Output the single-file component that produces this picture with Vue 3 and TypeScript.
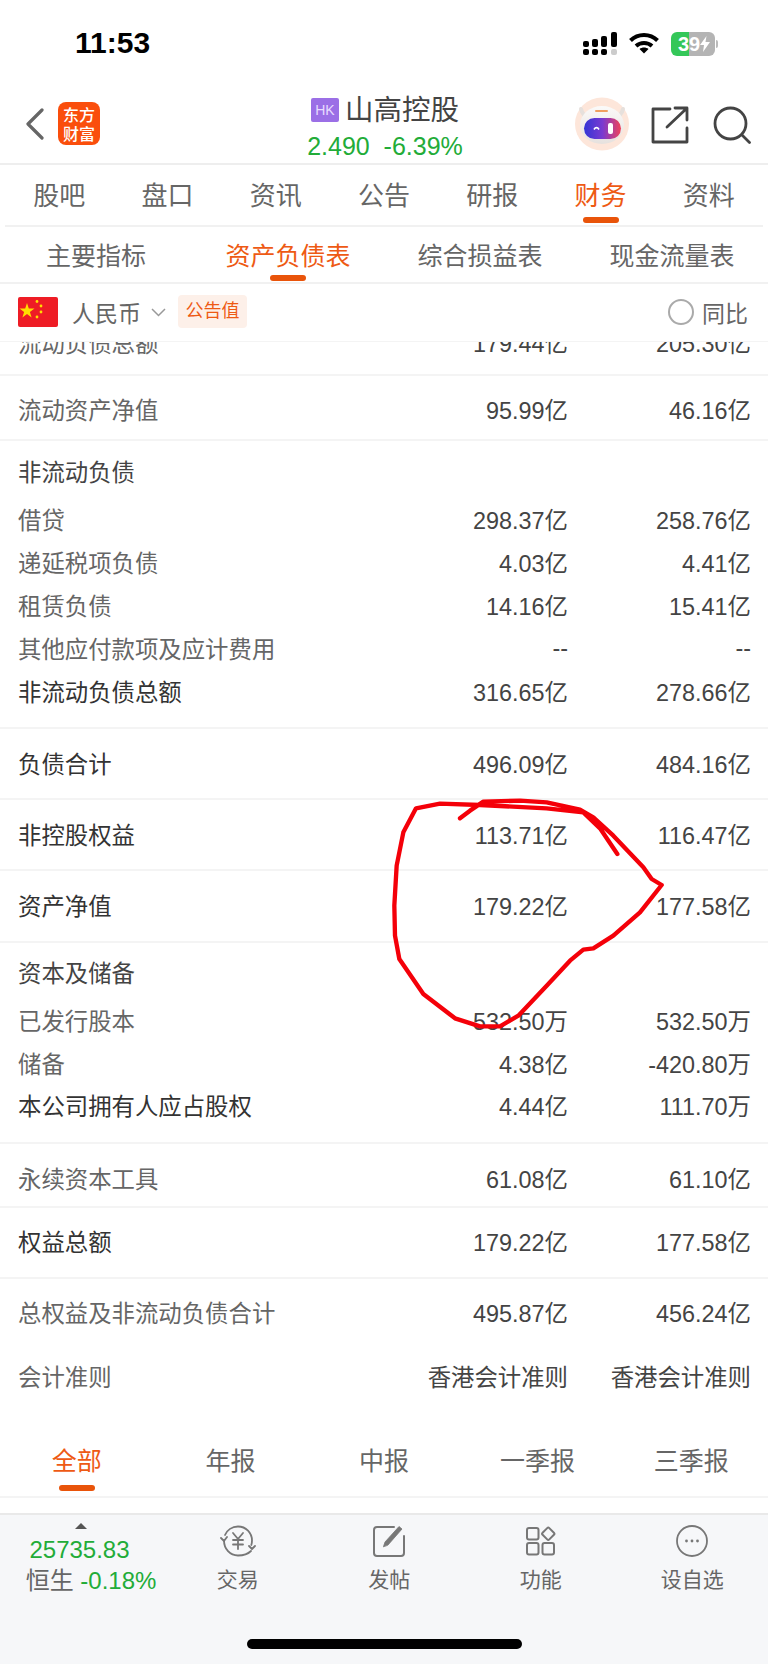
<script setup lang="ts">
interface Row {
  label: string
  a?: string
  b?: string
  kind: string
}

const mainTabs = ['股吧', '盘口', '资讯', '公告', '研报', '财务', '资料']
const subTabs = ['主要指标', '资产负债表', '综合损益表', '现金流量表']
const periods = ['全部', '年报', '中报', '一季报', '三季报']

// kind: 行高和颜色
const rows: Row[] = [
  { label: '流动负债总额', a: '179.44亿', b: '205.30亿', kind: 'first' },
  { label: '流动资产净值', a: '95.99亿', b: '46.16亿', kind: 'total h65 line' },
  { label: '非流动负债', kind: 'head' },
  { label: '借贷', a: '298.37亿', b: '258.76亿', kind: 'item' },
  { label: '递延税项负债', a: '4.03亿', b: '4.41亿', kind: 'item' },
  { label: '租赁负债', a: '14.16亿', b: '15.41亿', kind: 'item' },
  { label: '其他应付款项及应计费用', a: '--', b: '--', kind: 'item' },
  { label: '非流动负债总额', a: '316.65亿', b: '278.66亿', kind: 'item dark end line' },
  { label: '负债合计', a: '496.09亿', b: '484.16亿', kind: 'total h71 dark line' },
  { label: '非控股权益', a: '113.71亿', b: '116.47亿', kind: 'total h71 dark line' },
  { label: '资产净值', a: '179.22亿', b: '177.58亿', kind: 'total h72 dark line' },
  { label: '资本及储备', kind: 'head second' },
  { label: '已发行股本', a: '532.50万', b: '532.50万', kind: 'item' },
  { label: '储备', a: '4.38亿', b: '-420.80万', kind: 'item' },
  { label: '本公司拥有人应占股权', a: '4.44亿', b: '111.70万', kind: 'item dark end line' },
  { label: '永续资本工具', a: '61.08亿', b: '61.10亿', kind: 'total h64 line' },
  { label: '权益总额', a: '179.22亿', b: '177.58亿', kind: 'total h71 dark line' },
  { label: '总权益及非流动负债合计', a: '495.87亿', b: '456.24亿', kind: 'total h69' },
  { label: '会计准则', a: '香港会计准则', b: '香港会计准则', kind: 'item last' },
]
</script>

<template>
  <div class="page">
    <div class="status">
      <span class="time">11:53</span>
      <div class="status-icons">
        <svg class="signal" width="36" height="24" viewBox="0 0 36 24">
          <g fill="#000">
            <rect x="0" y="9" width="6" height="6" rx="2" />
            <rect x="0" y="17" width="6" height="6" rx="2" />
            <rect x="9" y="7" width="6" height="8" rx="2" />
            <rect x="9" y="17" width="6" height="6" rx="2" />
            <rect x="18" y="4" width="6" height="11" rx="2" />
            <rect x="18" y="17" width="6" height="6" rx="2" />
            <rect x="28" y="0" width="6" height="15" rx="2" />
          </g>
          <rect x="28" y="17" width="6" height="6" rx="2" fill="#ccc" />
        </svg>
        <svg width="30" height="22" viewBox="0 0 30 22" fill="none" stroke="#000" stroke-width="4">
          <path d="M1.5 8.5C9 1 21 1 28.5 8.5" />
          <path d="M7 14c4.500-4 11.500-4 16 0" />
          <path d="M15 21.500 10.500 17c2.500-2 6.500-2 9 0z" fill="#000" stroke="none" />
        </svg>
        <div class="battery">
          <div class="bat-body">
            <span class="bat-left">3</span><span class="bat-right">9<svg width="10" height="16" viewBox="0 0 10 16"><path d="M6.500 0 0 9h4l-1 7 7-10H5.500z" fill="#fff" /></svg></span>
          </div>
          <i class="bat-tip"></i>
        </div>
      </div>
    </div>

    <header class="top">
      <svg class="back" width="20" height="32" viewBox="0 0 20 32" fill="none" stroke="#666" stroke-width="3.200" stroke-linecap="round" stroke-linejoin="round">
        <path d="M17 2 3 16l14 14" />
      </svg>
      <div class="logo"><span>东方</span><span>财富</span></div>
      <div class="title-box">
        <div class="title"><span class="hk">HK</span>山高控股</div>
        <div class="price">2.490&nbsp;&nbsp;-6.39%</div>
      </div>
      <svg class="avatar" width="56" height="54" viewBox="0 0 56 54">
        <defs>
          <linearGradient id="visor" x1="0" y1="0" x2="1" y2="0">
            <stop offset="0" stop-color="#3336d6" />
            <stop offset="0.5" stop-color="#7a3bd0" />
            <stop offset="1" stop-color="#f0425a" />
          </linearGradient>
          <linearGradient id="face" x1="0" y1="0" x2="0" y2="1">
            <stop offset="0" stop-color="#fbfaf9" />
            <stop offset="1" stop-color="#e6e1de" />
          </linearGradient>
        </defs>
        <ellipse cx="28" cy="27" rx="27" ry="26.500" fill="#fde6da" />
        <path d="M7 12c1 4 3 7 7 8M49 12c-1 4-3 7-7 8" stroke="#e6e0dc" stroke-width="4" fill="none" stroke-linecap="round" />
        <ellipse cx="28" cy="28" rx="22" ry="19" fill="url(#face)" />
        <rect x="21" y="13" width="13" height="2" rx="1" fill="#f0a060" />
        <rect x="10" y="21" width="37" height="21" rx="10.500" fill="url(#visor)" />
        <path d="M20 32.500c1.500-2.500 3.500-2.500 5 0" stroke="#fff" stroke-width="1.600" fill="none" />
        <rect x="34" y="26" width="5" height="11" rx="2" fill="#fff" />
      </svg>
      <svg class="share" width="38" height="38" viewBox="0 0 38 38" fill="none" stroke="#444" stroke-width="2.800" stroke-linecap="round" stroke-linejoin="round">
        <path d="M19 3H2v33h34V22" />
        <path d="M16 21 35 3M24 2h12v12" />
      </svg>
      <svg class="search" width="38" height="38" viewBox="0 0 38 38" fill="none" stroke="#444" stroke-width="2.800" stroke-linecap="round">
        <circle cx="17.500" cy="17.500" r="15.500" />
        <path d="m29 29 7.500 7.500" />
      </svg>
    </header>

    <nav class="main-tabs">
      <div v-for="t in mainTabs" :key="t" class="tab" :class="{ on: t === '财务' }">{{ t }}</div>
    </nav>
    <nav class="sub-tabs">
      <div v-for="t in subTabs" :key="t" class="tab" :class="{ on: t === '资产负债表' }">{{ t }}</div>
    </nav>

    <div class="filter">
      <svg class="flag" width="40" height="30" viewBox="0 0 40 30">
        <rect width="40" height="30" rx="2" fill="#ee1c25" />
        <path d="m9 6 1.800 5.500h5.700l-4.600 3.400 1.700 5.500L9 17l-4.600 3.400 1.700-5.500-4.600-3.400h5.700z" fill="#ffde00" />
        <g fill="#ffde00">
          <circle cx="19" cy="4.500" r="1.400" />
          <circle cx="23" cy="9" r="1.400" />
          <circle cx="23" cy="15" r="1.400" />
          <circle cx="19" cy="20" r="1.400" />
        </g>
      </svg>
      <span class="cur">人民币</span>
      <svg class="arrow" width="15" height="9" viewBox="0 0 15 9" fill="none" stroke="#999" stroke-width="1.500">
        <path d="m1 1 6.500 6.500L14 1" />
      </svg>
      <span class="tag">公告值</span>
      <span class="yoy"><i class="radio"></i>同比</span>
    </div>

    <div class="table">
      <div v-for="r in rows" :key="r.label" class="row" :class="r.kind">
        <span class="label">{{ r.label }}</span>
        <span class="val">{{ r.a }}</span>
        <span class="val">{{ r.b }}</span>
      </div>
      <!-- 手写的红圈 -->
      <svg class="scribble" width="300" height="260" viewBox="0 0 900 780" fill="none" stroke="#f40009" stroke-width="13" stroke-linecap="round" stroke-linejoin="round">
        <path d="M712 225 660 148 610 100 500 88 300 78 180 74 108 88 70 160 50 260 43 380 45 470 58 540 130 645 225 718 300 742 360 742 415 710 500 620 570 545 610 512 640 508 700 470 780 400 845 318 815 300 790 265 700 170 640 115 600 92 500 70 420 65 310 68 270 95 240 118" />
      </svg>
    </div>

    <nav class="period">
      <div v-for="p in periods" :key="p" class="tab" :class="{ on: p === '全部' }">{{ p }}</div>
    </nav>

    <footer class="bottom">
      <div class="index">
        <i class="tri"></i>
        <div class="num">25735.83</div>
        <div class="name">恒生 <em>-0.18%</em></div>
      </div>
      <div class="action">
        <svg width="38" height="32" viewBox="0 0 38 32" fill="none" stroke="#777" stroke-width="1.800" stroke-linecap="round" stroke-linejoin="round">
          <path d="M6 10C8 5 13 1.500 19 1.500c8 0 14 6.500 14 14 0 1.500-.2 3-.7 4.500" />
          <path d="M32 26c-3 3-7.500 4.500-13 4.500-8 0-14-6.500-14-15" />
          <path d="m2 13 3 3 3-4M30 21l3 3 3-3" />
          <path d="m14 8 5 6 5-6M19 14v10M14 15h10M14 19.500h10" />
        </svg>
        <span>交易</span>
      </div>
      <div class="action">
        <svg width="32" height="32" viewBox="0 0 32 32" fill="none" stroke="#777" stroke-width="2" stroke-linecap="round" stroke-linejoin="round">
          <path d="M21 2H4a3 3 0 0 0-3 3v23a3 3 0 0 0 3 3h24a3 3 0 0 0 3-3V11" />
          <path d="M10.500 21.500 12 17 26 1.500l3 2.500-14 16z" fill="#777" stroke-width="0.800" />
        </svg>
        <span>发帖</span>
      </div>
      <div class="action">
        <svg width="30" height="30" viewBox="0 0 30 30" fill="none" stroke="#777" stroke-width="2" stroke-linejoin="round">
          <rect x="1" y="2" width="11.500" height="11.500" rx="2" />
          <rect x="1" y="17" width="11.500" height="11.500" rx="2" />
          <rect x="16.500" y="17" width="11.500" height="11.500" rx="2" />
          <rect x="17.500" y="3" width="9.500" height="9.500" rx="1.500" transform="rotate(45 22.250 7.750)" />
        </svg>
        <span>功能</span>
      </div>
      <div class="action">
        <svg width="32" height="32" viewBox="0 0 32 32" fill="none" stroke="#777" stroke-width="1.800">
          <circle cx="16" cy="16" r="15" />
          <g fill="#777" stroke="none">
            <circle cx="10.500" cy="16" r="1.400" />
            <circle cx="16" cy="16" r="1.400" />
            <circle cx="21.500" cy="16" r="1.400" />
          </g>
        </svg>
        <span>设自选</span>
      </div>
      <i class="home"></i>
    </footer>
  </div>
</template>

<style scoped>
.page {
  position: relative;
  width: 768px;
  height: 1664px;
  overflow: hidden;
  background: #fff;
  color: #666;
  font-family: "Liberation Sans", "Noto Sans CJK SC", sans-serif;
}

.status {
  height: 83px;
  display: flex;
  justify-content: space-between;
  padding: 26px 50px 0 75px;
  box-sizing: border-box;
}

.time {
  font-size: 30px;
  line-height: 34px;
  font-weight: 700;
  color: #000;
}

.status-icons {
  display: flex;
  gap: 12px;
  padding-top: 6px;
  height: 26px;
  align-items: flex-start;
}

.signal {
  margin-right: -2px;
}

.battery {
  display: flex;
  align-items: center;
}

.bat-body {
  width: 44px;
  height: 24px;
  border-radius: 6px;
  overflow: hidden;
  display: flex;
  font-size: 20px;
  font-weight: 700;
  line-height: 24px;
  color: #fff;
}

.bat-left {
  width: 18px;
  background: #34c759;
  text-align: right;
}

.bat-right {
  flex: 1;
  background: #b4b4b4;
  display: flex;
  align-items: center;
}

.bat-tip {
  width: 2px;
  height: 8px;
  background: #bbb;
  margin-left: 1px;
  border-radius: 0 2px 2px 0;
}

.top {
  height: 82px;
  box-sizing: border-box;
  border-bottom: 2px solid #eee;
  display: flex;
  align-items: flex-start;
  position: relative;
  padding-left: 25px;
}

.back {
  margin-top: 25px;
}

.logo {
  margin: 19px 0 0 13px;
  width: 42px;
  height: 43px;
  border-radius: 8px;
  background: #fa4e0c;
  color: #fff;
  font-size: 16px;
  line-height: 19px;
  font-family: "Noto Sans CJK SC", sans-serif;
  font-weight: 500;
  display: flex;
  flex-direction: column;
  align-items: center;
  justify-content: center;
}

.title-box {
  position: absolute;
  left: 299px;
  top: 10px;
  width: 172px;
  text-align: center;
}

.title {
  font-size: 28.500px;
  line-height: 34px;
  color: #444;
  display: flex;
  align-items: center;
  justify-content: center;
  gap: 6px;
}

.hk {
  width: 28px;
  height: 24px;
  border-radius: 2px;
  background: #9b6fe6;
  color: #e8dcff;
  font-size: 14px;
  line-height: 24px;
  text-align: center;
}

.price {
  font-size: 25px;
  line-height: 28px;
  color: #22ac38;
  margin-top: 5px;
  white-space: nowrap;
}

.avatar {
  position: absolute;
  left: 574px;
  top: 14px;
}

.share {
  position: absolute;
  left: 651px;
  top: 23px;
}

.search {
  position: absolute;
  left: 713px;
  top: 23px;
}

.tab {
  position: relative;
  text-align: center;
  color: #666;
}

.tab.on {
  color: #ee5a14;
}

.tab.on::after {
  content: "";
  position: absolute;
  left: 50%;
  bottom: 4px;
  width: 36px;
  height: 6px;
  margin-left: -18px;
  border-radius: 3px;
  background: #e9540a;
}

.main-tabs {
  margin: 0 5px;
  height: 62px;
  box-sizing: border-box;
  border-bottom: 2px solid #f1f1f1;
  display: grid;
  grid-template-columns: repeat(7, 1fr);
  font-size: 26px;
  line-height: 62px;
}

.sub-tabs {
  height: 57px;
  box-sizing: border-box;
  border-bottom: 2px solid #f1f1f1;
  display: grid;
  grid-template-columns: repeat(4, 1fr);
  font-size: 25px;
  line-height: 59px;
}

.sub-tabs .tab.on::after {
  bottom: 5px;
}

.filter {
  height: 57px;
  box-sizing: border-box;
  padding: 0 18px 2px;
  display: flex;
  align-items: center;
}

.flag {
  margin-right: 14px;
}

.cur {
  font-size: 23px;
}

.arrow {
  margin: 2px 12px 0 10px;
}

.tag {
  width: 69px;
  height: 33px;
  border-radius: 4px;
  background: #fdf0e9;
  color: #ee5a14;
  font-size: 18px;
  line-height: 33px;
  text-align: center;
}

.yoy {
  margin: 0 2px 0 auto;
  display: flex;
  align-items: center;
  gap: 8px;
  font-size: 23px;
}

.radio {
  width: 22px;
  height: 22px;
  border: 2px solid #aaa;
  border-radius: 50%;
}

.table {
  position: relative;
  height: 1082px;
  box-sizing: border-box;
  border-top: 1px solid #f4f4f4;
  overflow: hidden;
}

.row {
  display: grid;
  grid-template-columns: 1fr 183px 183px;
  align-items: center;
  padding: 0 17px 0 18px;
  font-size: 23.400px;
  color: #666;
  box-sizing: border-box;
}

.label {
  white-space: nowrap;
}

.val {
  text-align: right;
  color: #444;
}

.row.line {
  border-bottom: 2px solid #f4f4f4;
}

.row.first {
  height: 34px;
  border-bottom: 2px solid #f4f4f4;
  align-items: start;
}

.row.first > span {
  margin-top: -17px;
}

.row.head {
  height: 56px;
  padding-top: 4px;
  color: #444;
}

.row.head.second {
  height: 55px;
  padding-top: 2px;
}

.row.item {
  height: 43.250px;
}

.row.item.end {
  height: 59px;
  padding-bottom: 16px;
}

.row.dark {
  color: #333;
}

.row.h64 {
  height: 64px;
  padding-top: 7px;
}

.row.h65 {
  height: 65px;
  padding-top: 3px;
}

.row.h69 {
  height: 69px;
  padding-bottom: 3px;
}

.row.h71 {
  height: 71px;
  padding-bottom: 2px;
}

.row.h72 {
  height: 72px;
  padding-bottom: 2px;
}

.row.item.last {
  height: 56px;
}

.scribble {
  position: absolute;
  left: 380px;
  top: 437px;
}

.period {
  height: 75px;
  box-sizing: border-box;
  border-bottom: 2px solid #f4f4f4;
  display: grid;
  grid-template-columns: repeat(5, 1fr);
  font-size: 25px;
  line-height: 76px;
}

.period .tab.on::after {
  bottom: 8px;
}

.bottom {
  position: absolute;
  left: 0;
  right: 0;
  top: 1513px;
  bottom: 0;
  background: #f6f7f9;
  border-top: 2px solid #e9e9e9;
  display: grid;
  grid-template-columns: 162px repeat(4, 151.500px);
  box-sizing: border-box;
}

.index {
  text-align: center;
  position: relative;
  color: #666;
  padding-top: 20px;
}

.tri {
  position: absolute;
  left: 75px;
  top: 8px;
  border-left: 6px solid transparent;
  border-right: 6px solid transparent;
  border-bottom: 6px solid #555;
}

.num {
  font-size: 24px;
  line-height: 30px;
  color: #22ac38;
  margin-left: -3px;
}

.name {
  font-size: 24px;
  line-height: 30px;
  margin: 1px 0 0 20px;
  white-space: nowrap;
}

.name em {
  font-style: normal;
  color: #22ac38;
}

.action {
  display: flex;
  flex-direction: column;
  align-items: center;
  padding-top: 10px;
  font-size: 21px;
  color: #666;
}

.action svg {
  height: 32px;
}

.action span {
  margin-top: 8px;
  line-height: 30px;
}

.home {
  position: absolute;
  left: 247px;
  top: 124px;
  width: 275px;
  height: 10px;
  border-radius: 5px;
  background: #000;
}
</style>
